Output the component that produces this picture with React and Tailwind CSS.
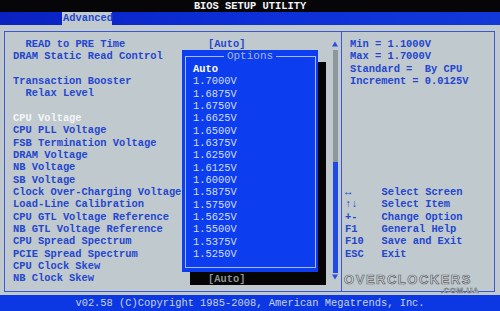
import React from "react";

const leftRows = [
  { t: "READ to PRE Time", indent: true, v: "[Auto]" },
  { t: "DRAM Static Read Control" },
  { t: "" },
  { t: "Transaction Booster" },
  { t: "Relax Level", indent: true },
  { t: "" },
  { t: "CPU Voltage", sel: true },
  { t: "CPU PLL Voltage" },
  { t: "FSB Termination Voltage" },
  { t: "DRAM Voltage" },
  { t: "NB Voltage" },
  { t: "SB Voltage" },
  { t: "Clock Over-Charging Voltage" },
  { t: "Load-Line Calibration" },
  { t: "CPU GTL Voltage Reference" },
  { t: "NB GTL Voltage Reference" },
  { t: "CPU Spread Spectrum" },
  { t: "PCIE Spread Spectrum" },
  { t: "CPU Clock Skew" },
  { t: "NB Clock Skew" },
];

const options = [
  "Auto",
  "1.7000V",
  "1.6875V",
  "1.6750V",
  "1.6625V",
  "1.6500V",
  "1.6375V",
  "1.6250V",
  "1.6125V",
  "1.6000V",
  "1.5875V",
  "1.5750V",
  "1.5625V",
  "1.5500V",
  "1.5375V",
  "1.5250V",
];

const keys = [
  ["↔", "Select Screen"],
  ["↑↓", "Select Item"],
  ["+-", "Change Option"],
  ["F1", "General Help"],
  ["F10", "Save and Exit"],
  ["ESC", "Exit"],
];

export default function App() {
  return (
    <div className="relative w-[500px] h-[311px] overflow-hidden bg-[#c0c9cd] flex flex-col font-['Liberation_Mono',monospace] font-bold text-[10.4px] leading-[12.33px] text-[#2446d0]">
      {/* Title bar */}
      <div className="h-[12px] bg-[#060608] flex items-center justify-center text-[#f2f4f8] leading-[12px]">
        BIOS SETUP UTILITY
      </div>
      {/* Tab bar */}
      <div className="h-[13px] bg-gradient-to-r from-[#0a22c0] via-[#0c2fd8] to-[#1238d8] flex items-end">
        <div className="ml-[62px] w-[50px] h-[13px] bg-[#c0c9cd] text-[#2446d0] leading-[13px] pl-[1px]">
          Advanced
        </div>
      </div>
      {/* Main */}
      <div className="flex-1 pt-[6px] pl-[4px] pr-[5px] pb-[3px]">
        <div className="relative h-full border border-[#3a58d4] flex">
          {/* Left panel */}
          <div className="w-[336px] flex">
            <div className="flex-1 pl-[8px] pt-[6px] flex flex-col">
              {leftRows.map((r, i) => (
                <div key={i} className="h-[12.33px] flex whitespace-pre">
                  <div
                    className={
                      "w-[195px] " +
                      (r.indent ? "pl-[12.5px] " : "") +
                      (r.sel ? "text-[#f4f6fa]" : "")
                    }
                  >
                    {r.t}
                  </div>
                  {r.v && <div>{r.v}</div>}
                </div>
              ))}
            </div>
            {/* Scrollbar */}
            <div className="w-[6px] mr-[3px] pt-[9px] flex flex-col items-center">
              <svg width="6" height="6" viewBox="0 0 6 6" className="mb-[3px]">
                <polygon points="3,0.5 6,5.5 0,5.5" fill="#2a4fe0" />
              </svg>
              <div className="w-[5px] h-[112px] bg-[#8e979c]" />
              <div className="w-[5px] h-[111px] bg-[#1f4ae4]" />
              <svg width="6" height="6" viewBox="0 0 6 6" className="mt-[1px]">
                <polygon points="0,0.5 6,0.5 3,5.5" fill="#2a4fe0" />
              </svg>
            </div>
          </div>
          {/* Right panel */}
          <div className="flex-1 border-l border-[#3a58d4] pt-[6px] flex flex-col">
            <div className="pl-[8px] whitespace-pre">
              <div className="h-[12.33px]">Min = 1.1000V</div>
              <div className="h-[12.33px]">Max = 1.7000V</div>
              <div className="h-[12.33px]">Standard =  By CPU</div>
              <div className="h-[12.33px]">Increment = 0.0125V</div>
            </div>
            <div className="h-[98.6px]" />
            <div className="pl-[3px]">
              {keys.map(([k, l]) => (
                <div key={k} className="h-[12.33px] flex whitespace-pre">
                  <div className="w-[36.5px]">{k}</div>
                  <div>{l}</div>
                </div>
              ))}
            </div>
          </div>

          {/* Popup shadow */}
          <div className="absolute left-[185px] top-[30px] w-[136px] h-[223px] bg-[#050505] flex flex-col justify-end">
            <div className="h-[12.33px] pl-[18px] text-[#8d9296]">[Auto]</div>
          </div>
          {/* Popup */}
          <div className="absolute left-[177px] top-[18px] w-[136px] h-[222px] bg-[#0c3ef0]">
            <div className="absolute left-[3px] right-[2px] top-[6px] bottom-[4px] border border-[#a8bcf4]" />
            <div className="absolute left-0 right-0 top-[0px] flex justify-center">
              <div className="bg-[#0c3ef0] px-[3px] text-[#a6b6e4] font-normal text-[11px] leading-[12px]">
                Options
              </div>
            </div>
            <div className="relative pt-[13px] pl-[11px] flex flex-col">
              {options.map((o, i) => (
                <div
                  key={o}
                  className={
                    "h-[12.33px] " +
                    (i === 0 ? "text-[#ffffff]" : "text-[#d4def6] font-normal")
                  }
                >
                  {o}
                </div>
              ))}
            </div>
          </div>
        </div>
      </div>
      {/* Bottom bar */}
      <div className="h-[16px] bg-[#0c38e4] flex items-center justify-center text-[#c9d2e4] font-normal leading-[16px] whitespace-pre">
        v02.58 (C)Copyright 1985-2008, American Megatrends, Inc.
      </div>

      {/* Watermark */}
      <div className="absolute left-[337px] top-[272px] w-[142px] flex flex-col items-end font-['Liberation_Sans',sans-serif]">
        <div className="w-full text-center text-[13px] leading-[15px] h-[15px] font-bold tracking-[1.5px] text-[#d6dbde] [-webkit-text-stroke:0.7px_#5c646a]">
          OVERCLOCKERS
        </div>
        <div className="text-[8px] leading-[8px] h-[8px] font-bold tracking-[0.5px] text-[#d6dbde] [-webkit-text-stroke:0.5px_#5c646a]">
          .COM.UA
        </div>
      </div>
    </div>
  );
}
